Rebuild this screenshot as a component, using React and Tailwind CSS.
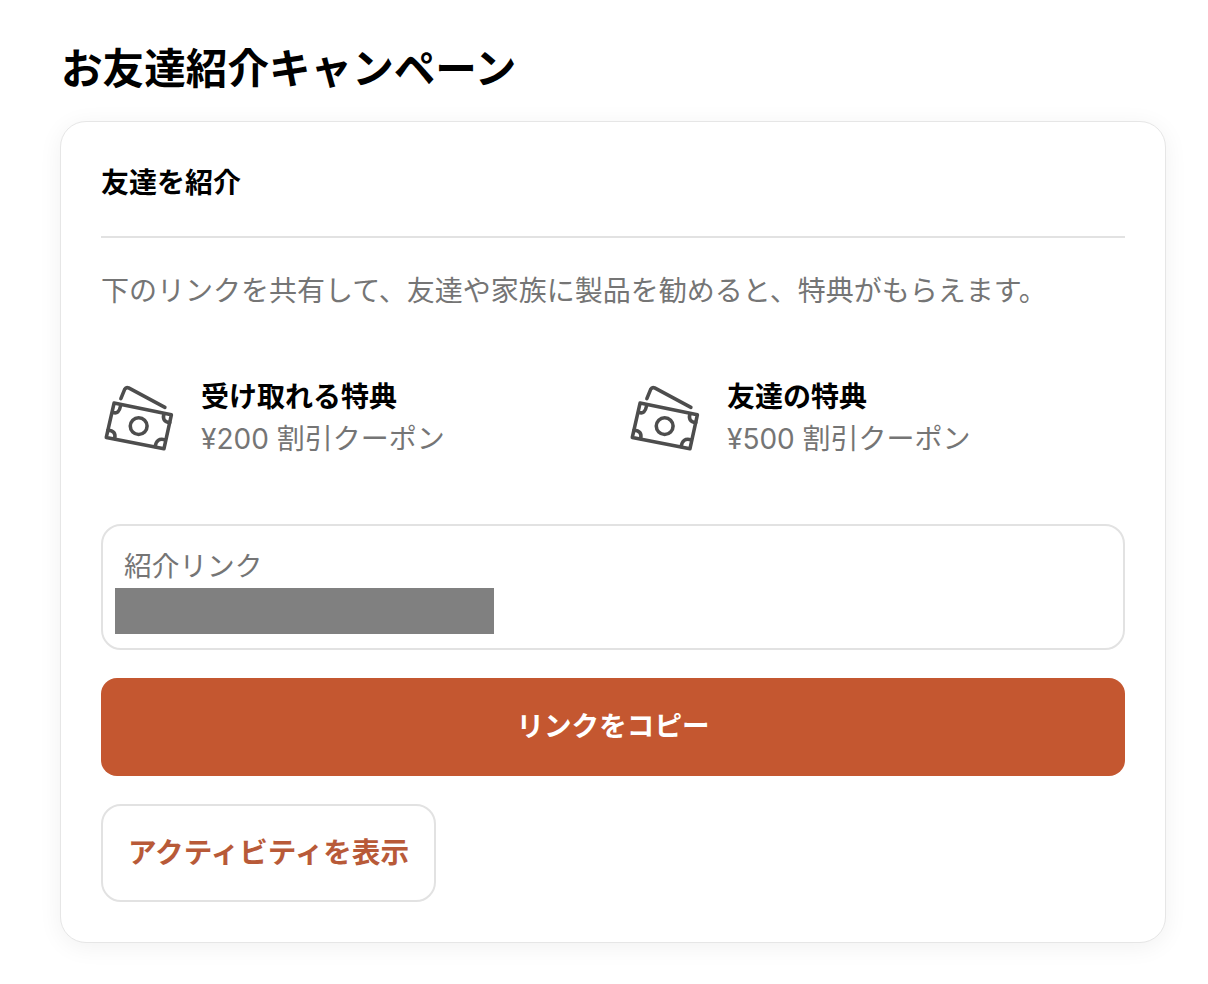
function MoneyIcon() {
  return (
    <svg viewBox="40 40 216 210" className="w-[70px] h-[68px] shrink-0 ml-[3px]" fill="none" stroke="#4d4d4d" strokeWidth="11" strokeLinecap="round" strokeLinejoin="round">
      <path d="M92 85 L104 56 Q108 49 116 52 L228 112" />
      <path d="M71 99 L248 135 L225 240 L47 205 Z" />
      <circle cx="147" cy="170" r="26" />
      <path d="M68 128 Q86 134 91 108" />
      <path d="M225 133 Q218 156 243 159" />
      <path d="M52 183 Q78 184 73 208" />
      <path d="M227 212 Q202 206 198 233" />
    </svg>
  );
}

function Reward({ title, text }) {
  return (
    <div className="w-[526px] shrink-0 flex items-center">
      <MoneyIcon />
      <div className="ml-[27px]">
        <div className="text-[28px] leading-[42px] font-bold text-black">{title}</div>
        <div className="text-[28px] leading-[42px] text-[#757575]">{text}</div>
      </div>
    </div>
  );
}

export default function App() {
  return (
    <div className="w-[1208px] h-[984px] bg-white overflow-hidden px-[60px] font-['Inter','Noto_Sans_CJK_JP',sans-serif]">
      <h1 className="pt-[39px] pl-[1px] h-[121px] text-[41.6px] leading-[60px] font-bold text-black">お友達紹介キャンペーン</h1>
      <div className="w-[1106px] h-[822px] rounded-[26px] border border-[#e6e6e6] bg-white px-10 shadow-[0_4px_24px_rgba(0,0,0,0.06)]">
        <div className="h-[116px] border-b-2 border-[#e2e2e2] pt-[40px] text-[28px] leading-[42px] font-bold text-black">友達を紹介</div>
        <p className="mt-[31px] text-[28px] leading-[44px] text-[#757575] whitespace-nowrap">下のリンクを共有して、友達や家族に製品を勧めると、特典がもらえます。</p>
        <div className="mt-[63px] flex">
          <Reward title="受け取れる特典" text="¥200 割引クーポン" />
          <Reward title="友達の特典" text="¥500 割引クーポン" />
        </div>
        <div className="mt-[64px] h-[126px] rounded-[20px] border-2 border-[#e2e2e2] pl-[12px] pt-[19px]">
          <div className="pl-[9px] pb-[1px] text-[27.7px] leading-[42px] text-[#757575]">紹介リンク</div>
          <div className="w-[379px] h-[46px] bg-[#808080]"></div>
        </div>
        <button className="mt-[28px] block w-full h-[98px] rounded-[16px] bg-[#c45730] text-[27.6px] font-bold text-white">リンクをコピー</button>
        <button className="mt-[28px] block w-[335px] h-[98px] rounded-[20px] border-2 border-[#e2e2e2] bg-white text-[28.6px] font-bold text-[#b85a38]">アクティビティを表示</button>
      </div>
    </div>
  );
}
